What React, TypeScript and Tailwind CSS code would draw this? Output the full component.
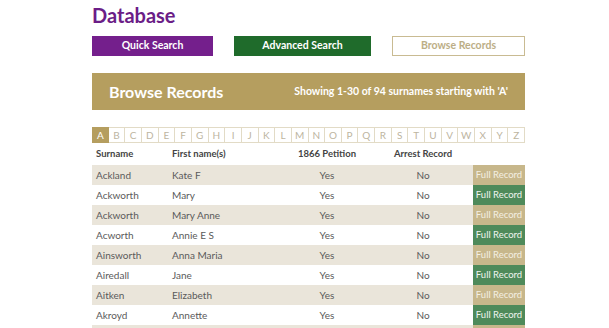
import React from "react";

type Row = { surname: string; first: string; petition: string; arrest: string };

const LETTERS = "ABCDEFGHIJKLMNOPQRSTUVWXYZ".split("");

const ROWS: Row[] = [
  { surname: "Ackland", first: "Kate F", petition: "Yes", arrest: "No" },
  { surname: "Ackworth", first: "Mary", petition: "Yes", arrest: "No" },
  { surname: "Ackworth", first: "Mary Anne", petition: "Yes", arrest: "No" },
  { surname: "Acworth", first: "Annie E S", petition: "Yes", arrest: "No" },
  { surname: "Ainsworth", first: "Anna Maria", petition: "Yes", arrest: "No" },
  { surname: "Airedall", first: "Jane", petition: "Yes", arrest: "No" },
  { surname: "Aitken", first: "Elizabeth", petition: "Yes", arrest: "No" },
  { surname: "Akroyd", first: "Annette", petition: "Yes", arrest: "No" },
  { surname: "Alexander", first: "Agnes", petition: "Yes", arrest: "No" },
];

const COLS = "grid grid-cols-[80px_109px_92px_100px_52px]";

export default function App() {
  return (
    <main className="min-h-screen bg-white font-['Lato',sans-serif] text-[#5a5a5a]">
      <div className="ml-[92px] w-[433px]">
        <h1 className="pt-[3px] text-[20px] font-bold leading-[25px] text-[#6b1d87]">Database</h1>

        <div className="mt-[8px] flex justify-between">
          <button className="h-[20px] w-[121px] bg-[#741f8c] text-[10.5px] font-bold text-white">Quick Search</button>
          <button className="h-[20px] w-[137px] bg-[#1f6b2b] text-[10.5px] font-bold text-white">Advanced Search</button>
          <button className="h-[20px] w-[133px] border border-[#c9bb92] bg-white text-[10.5px] font-bold text-[#bcae86]">
            Browse Records
          </button>
        </div>

        <section className="mt-[17px] flex h-[37px] items-center justify-between bg-[#b59e5f] px-[17px] text-white">
          <h2 className="text-[16px] font-bold">Browse Records</h2>
          <p className="text-[10.5px] font-bold">Showing 1-30 of 94 surnames starting with 'A'</p>
        </section>

        <nav className="mt-[17px] grid grid-cols-[repeat(26,1fr)]">
          {LETTERS.map(l =>
            l === "A" ? (
              <span key={l} className="flex h-[16px] items-center justify-center bg-[#b59e5f] text-[10px] text-white">
                {l}
              </span>
            ) : (
              <span
                key={l}
                className="flex h-[16px] items-center justify-center border border-l-0 border-[#e2dbc6] text-[10px] text-[#bdb59f]"
              >
                {l}
              </span>
            )
          )}
        </nav>

        <div className={`${COLS} h-[22px] items-center text-[9.5px] font-bold text-[#444]`}>
          <span className="pl-[4px]">Surname</span>
          <span>First name(s)</span>
          <span className="text-center">1866 Petition</span>
          <span className="text-center">Arrest Record</span>
          <span />
        </div>

        {ROWS.map((r, i) => (
          <div
            key={i}
            className={`${COLS} h-[20px] items-center text-[10px] ${i % 2 === 0 ? "bg-[#eae5da]" : "bg-white"}`}
          >
            <span className="pl-[4px]">{r.surname}</span>
            <span>{r.first}</span>
            <span className="text-center">{r.petition}</span>
            <span className="text-center">{r.arrest}</span>
            <span
              className={`flex h-full items-center justify-center text-[9.5px] ${
                i % 2 === 0 ? "bg-[#c7b78b] text-[#f4efe2]" : "bg-[#4e8a5a] text-[#eef5ef]"
              }`}
            >
              Full Record
            </span>
          </div>
        ))}
      </div>
    </main>
  );
}
